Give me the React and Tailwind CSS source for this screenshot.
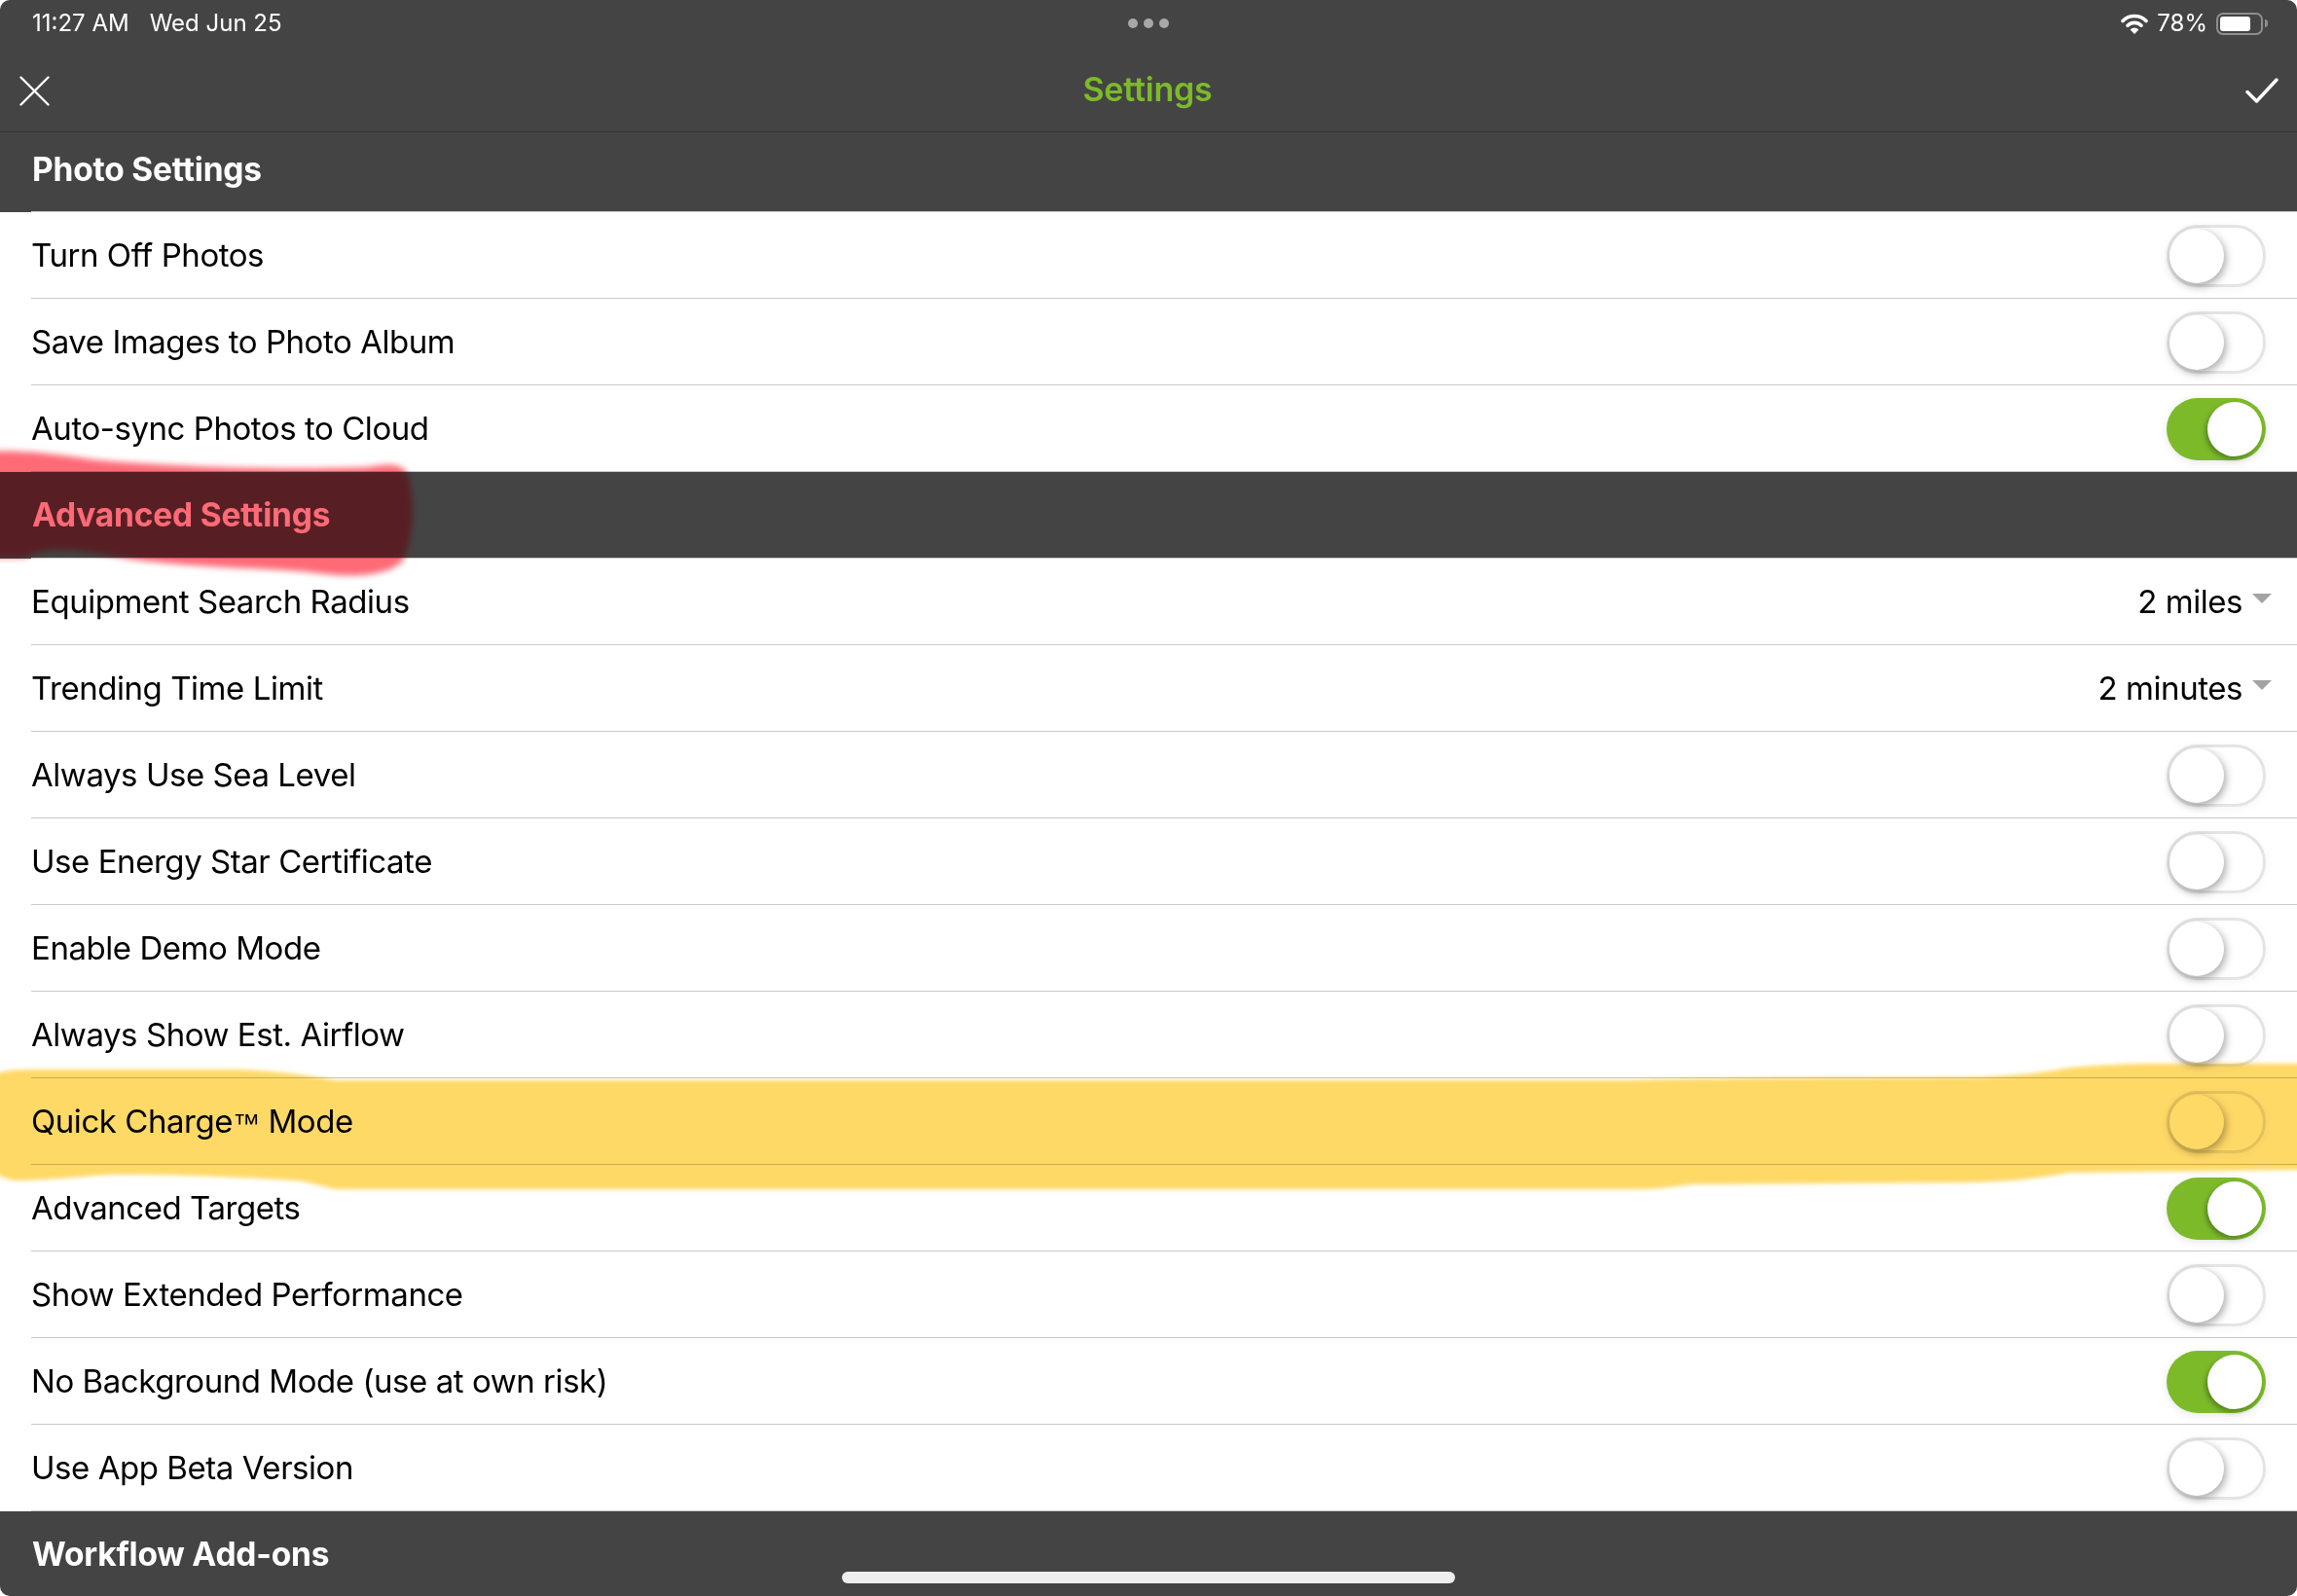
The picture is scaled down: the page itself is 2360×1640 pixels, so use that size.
const sans = "font-['Inter','Liberation_Sans',sans-serif]";

const redMark =
  "M-10 4C30 2 80 10 100 13C180 20 300 24 380 20C400 16 415 16 420 30C426 60 425 100 412 118C395 132 360 134 320 128C260 122 180 124 110 110C80 106 50 100 25 113L-10 113Z";

const yellowMark =
  "M-10 30C-5 20 10 19 40 19L240 19C280 20 310 24 345 30L1676 30C1700 29 1720 28 2023 27C2070 26 2100 22 2127 17C2160 14 2190 13 2214 13L2370 13L2370 122L2127 125C2080 133 2060 134 2023 135L1737 137C1710 141 1700 142 1676 142L345 142C320 136 310 133 300 133C220 128 170 127 115 127C70 130 40 133 15 133C0 130-10 125-10 110Z";

const Toggle = ({ on }) => {
  if (on) {
    return (
      <div className="mt-[2px] flex h-[64px] w-[102px] items-center justify-end rounded-full bg-[#7cba2a] pr-[4px] shadow-[0_2px_10px_rgba(0,0,0,0.1)]">
        <div className="size-[56px] rounded-full bg-white shadow-[-2px_3px_5px_rgba(0,0,0,0.3)]" />
      </div>
    );
  }
  return (
    <div className="mt-[2px] flex h-[64px] w-[102px] items-center rounded-full border-[3px] border-[#e4e4e4] bg-white shadow-[0_2px_10px_rgba(0,0,0,0.04)]">
      <div className="size-[56px] rounded-full bg-white shadow-[2px_3px_8px_rgba(0,0,0,0.35)]" />
    </div>
  );
};

const Caret = () => (
  <svg width="20" height="11" viewBox="0 0 20 11" className="mb-[6px] ml-[10px]">
    <path d="M0 0h20L10 10z" fill="#a3a3a3" />
  </svg>
);

const Row = ({ label, on, value }) => (
  <div className="h-[89px] pl-[32px]">
    <div className="flex h-[89px] items-center justify-between border-b border-[#c9c9c9] pr-[32px] text-[33px] tracking-[-0.45px] text-black">
      <span className="mt-[1px]">{label}</span>
      {value ? (
        <span className="-mr-[6px] mt-[1px] flex items-center">
          {value}
          <Caret />
        </span>
      ) : (
        <Toggle on={on} />
      )}
    </div>
  </div>
);

const SectionHeader = ({ title, height }) => (
  <div className="bg-[#444444]">
    <div className={`flex items-center pl-[33px] text-[33.5px] font-bold tracking-[-0.2px] text-white ${height}`}>
      {title}
    </div>
    <div className="ml-[32px] h-px bg-[#c9c9c9]" />
  </div>
);

const photoRows = [
  { id: "photos-off", label: "Turn Off Photos" },
  { id: "save-album", label: "Save Images to Photo Album" },
  { id: "auto-sync", label: "Auto-sync Photos to Cloud", on: true },
];

const advancedRows = [
  { id: "radius", label: "Equipment Search Radius", value: "2 miles" },
  { id: "trending", label: "Trending Time Limit", value: "2 minutes" },
  { id: "sea-level", label: "Always Use Sea Level" },
  { id: "energy-star", label: "Use Energy Star Certificate" },
  { id: "demo", label: "Enable Demo Mode" },
  { id: "airflow", label: "Always Show Est. Airflow" },
  {
    id: "quick-charge",
    label: (
      <>
        Quick Charge<span className="font-['Liberation_Sans'] text-[28px]">™</span> Mode
      </>
    ),
  },
  { id: "targets", label: "Advanced Targets", on: true },
  { id: "performance", label: "Show Extended Performance" },
  { id: "background", label: "No Background Mode (use at own risk)", on: true },
  { id: "beta", label: "Use App Beta Version" },
];

export default function App() {
  return (
    <div className={`relative h-[1640px] w-[2360px] overflow-hidden rounded-[10px] bg-white ${sans}`}>
      {/* top bar */}
      <div className="border-b border-[#333333] bg-[#444444]">
        <div className="flex h-[48px] items-center justify-between text-[24px] text-white">
          <div className="flex w-[500px] gap-[21px] pl-[33px]">
            <span>11:27 AM</span>
            <span>Wed Jun 25</span>
          </div>
          <div className="flex gap-[6px]">
            <span className="size-[10px] rounded-full bg-[#a8a8a8]" />
            <span className="size-[10px] rounded-full bg-[#a8a8a8]" />
            <span className="size-[10px] rounded-full bg-[#a8a8a8]" />
          </div>
          <div className="flex w-[500px] items-center justify-end gap-[9px] pr-[30px]">
            <svg width="28" height="22" viewBox="0 0 28 22">
              <path d="M2 8.5a17 17 0 0 1 24 0" fill="none" stroke="white" strokeWidth="3.6" strokeLinecap="round" />
              <path d="M7 13.2a10 10 0 0 1 14 0" fill="none" stroke="white" strokeWidth="3.6" strokeLinecap="round" />
              <path d="M14 22l-4.4-4.6a6 6 0 0 1 8.8 0z" fill="white" />
            </svg>
            <span>78%</span>
            <div className="flex items-center gap-[2px]">
              <div className="flex h-[23px] w-[48px] items-center rounded-[7px] border-2 border-[#8e8e8e] p-[2px]">
                <div className="h-full w-[31px] rounded-[3px] bg-white" />
              </div>
              <div className="h-[8px] w-[3px] rounded-r-full bg-[#8e8e8e]" />
            </div>
          </div>
        </div>
        <div className="flex h-[87px] items-center justify-between pl-[20px] pr-[19px]">
          <svg width="31" height="31" viewBox="0 0 31 31" className="mt-[3px]">
            <path d="M1.5 1.5l28 28M29.5 1.5l-28 28" stroke="white" strokeWidth="2.4" strokeLinecap="round" />
          </svg>
          <span className="text-[34px] font-semibold tracking-[-0.2px] text-[#7cba2a]">Settings</span>
          <svg width="34" height="26" viewBox="0 0 34 26" className="mt-[3px]">
            <path d="M2 14.5l9.5 9.5L32 2" fill="none" stroke="white" strokeWidth="3.4" strokeLinecap="round" strokeLinejoin="round" />
          </svg>
        </div>
      </div>

      <SectionHeader title="Photo Settings" height="h-[81px] pb-[4px]" />
      {photoRows.map((row) => (
        <Row key={row.id} {...row} />
      ))}

      <SectionHeader title="Advanced Settings" height="h-[88px]" />
      {advancedRows.map((row) => (
        <Row key={row.id} {...row} />
      ))}

      <SectionHeader title="Workflow Add-ons" height="h-[87px] pt-[2px]" />

      {/* home indicator */}
      <div className="absolute bottom-[13px] left-[865px] h-[12px] w-[630px] rounded-full bg-[#eeeeee]" />

      {/* red marker */}
      <svg className="absolute left-0 top-[460px] overflow-visible mix-blend-multiply blur-[3px]" width="430" height="135" viewBox="0 0 430 135">
        <path d={redMark} fill="#fe737f" />
      </svg>
      <svg className="absolute left-0 top-[460px] overflow-visible opacity-10 blur-[3px]" width="430" height="135" viewBox="0 0 430 135">
        <path d={redMark} fill="#ff2232" />
      </svg>

      {/* yellow marker */}
      <svg className="absolute left-0 top-[1080px] overflow-visible mix-blend-multiply blur-[2px]" width="2360" height="150" viewBox="0 0 2360 150">
        <path d={yellowMark} fill="#ffd966" />
      </svg>
    </div>
  );
}
